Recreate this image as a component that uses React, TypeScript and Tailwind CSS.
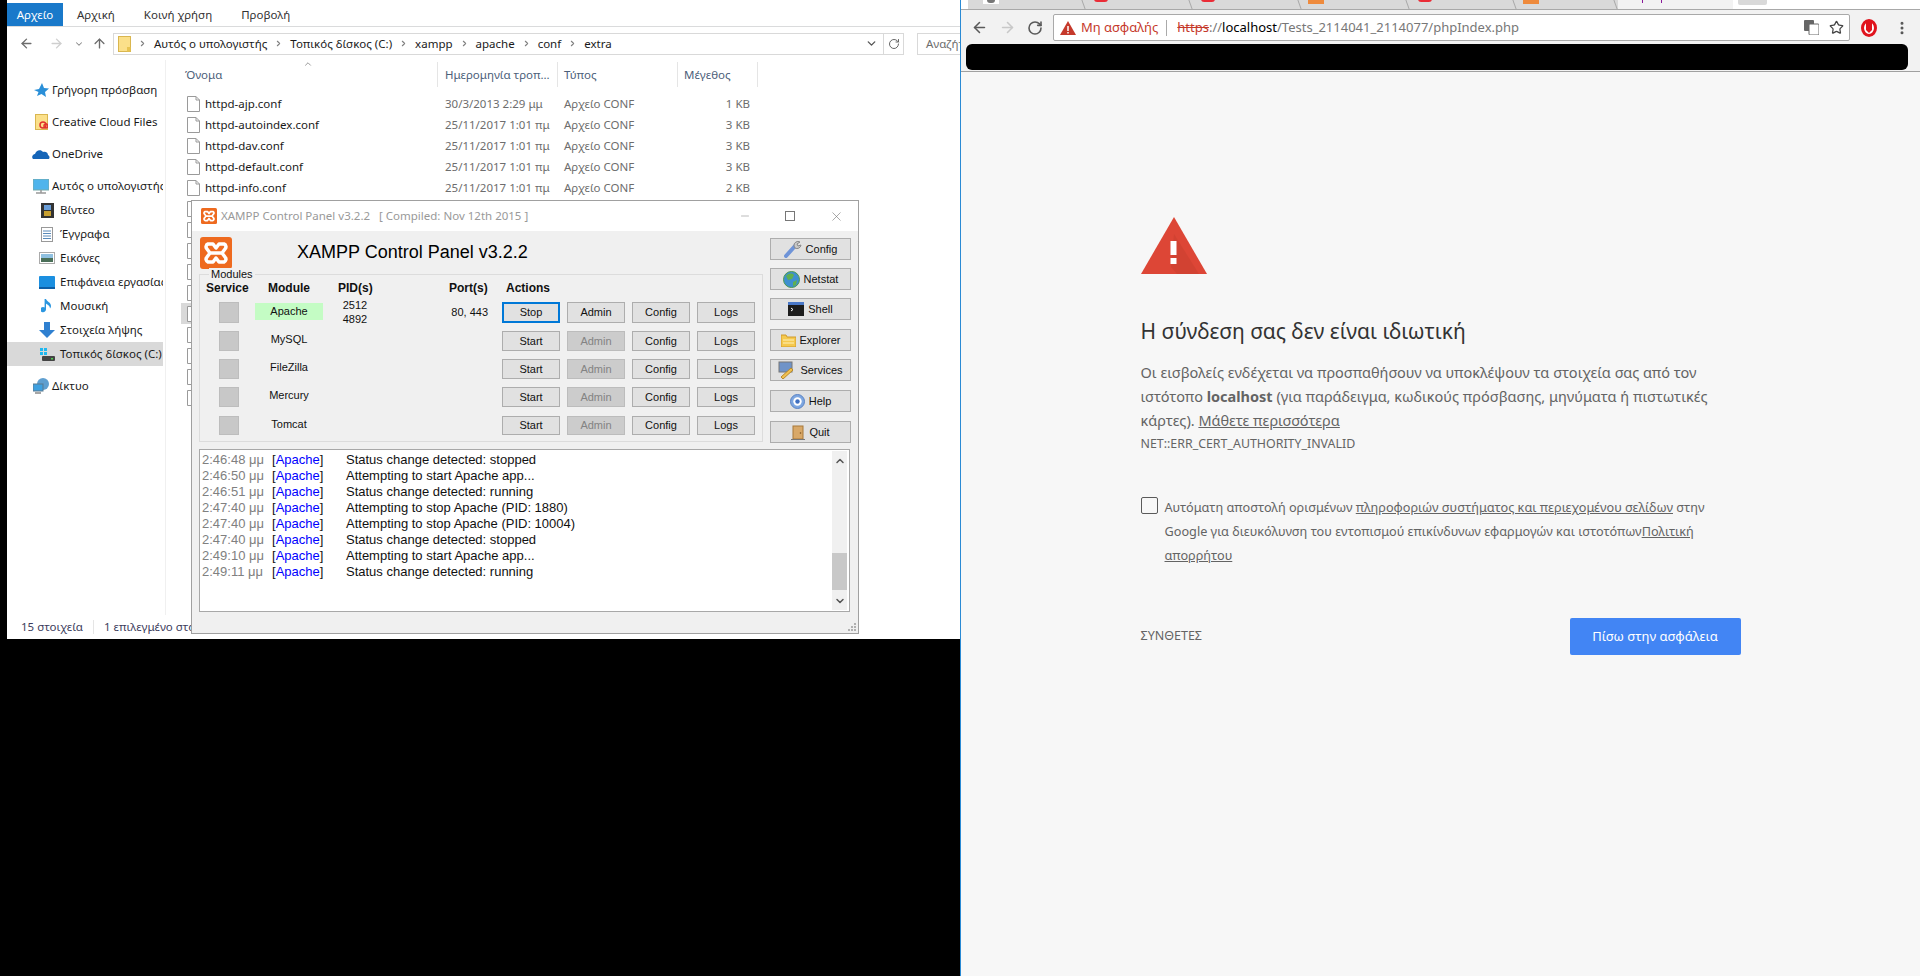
import { ArrowLeft, ArrowRight, ArrowUp, ChevronDown, ChevronRight, ChevronUp, RotateCw, Star, EllipsisVertical, Minus, X } from "lucide-react";

const files = [
  ["httpd-ajp.conf", "30/3/2013 2:29 μμ", "1 KB"],
  ["httpd-autoindex.conf", "25/11/2017 1:01 πμ", "3 KB"],
  ["httpd-dav.conf", "25/11/2017 1:01 πμ", "3 KB"],
  ["httpd-default.conf", "25/11/2017 1:01 πμ", "3 KB"],
  ["httpd-info.conf", "25/11/2017 1:01 πμ", "2 KB"],
];

const FileIcon = () => (
  <svg width="13" height="16" viewBox="0 0 13 16" className="shrink-0">
    <path d="M.5.5h8.500l3.500 3.500v11.500h-12z" fill="#fff" stroke="#9a9a9a" />
    <path d="M9 .5v3.500h3.500" fill="none" stroke="#9a9a9a" />
  </svg>
);

const XamppLogo = ({ size }: { size: number }) => (
  <svg width={size} height={size} viewBox="0 0 32 32" className="shrink-0">
    <rect width="32" height="32" rx="3" fill="#ee6a1f" />
    <path d="M8 7h5l3 4 3-4h5a3 3 0 0 1 1 5l-3 4 3 4a3 3 0 0 1-1 5h-5l-3-4-3 4H8a3 3 0 0 1-1-5l3-4-3-4a3 3 0 0 1 1-5z M10 16h12" fill="none" stroke="#fff" strokeWidth="3.500" strokeLinejoin="round" />
  </svg>
);

const Folder = () => (
  <svg width="13" height="16" viewBox="0 0 13 16" className="shrink-0">
    <rect x="0.500" y="0.500" width="12" height="15" fill="#fbe08a" stroke="#d9b64f" />
    <rect x="9" y="11" width="3.500" height="4.500" fill="#e8c452" />
  </svg>
);

const CloudFolder = () => (
  <svg width="13" height="16" viewBox="0 0 13 16" className="shrink-0">
    <rect x="0.500" y="0.500" width="12" height="15" fill="#fbe08a" stroke="#d9b64f" />
    <circle cx="8" cy="11" r="3" fill="none" stroke="#e0332b" strokeWidth="1.500" />
    <circle cx="11" cy="12" r="2" fill="none" stroke="#e0332b" strokeWidth="1.500" />
  </svg>
);

function NavItem({ label, child, selected, icon }: { label: string; child?: boolean; selected?: boolean; icon: React.ReactNode }) {
  return (
    <div className={`flex h-6 items-center overflow-hidden whitespace-nowrap ${child ? "pl-[30px]" : "pl-[24px]"} ${selected ? "bg-[#d9d9d9]" : ""}`}>
      <span className={`flex w-5 shrink-0 justify-center ${child ? "mr-[3px]" : "mr-[1px]"}`}>{icon}</span>
      <span>{label}</span>
    </div>
  );
}

function WinButton({ label, disabled, focused, className }: { label: string; disabled?: boolean; focused?: boolean; className: string }) {
  return (
    <div
      className={`flex items-center justify-center border text-[11px] ${className} ${
        focused ? "border-2 border-[#0078d7] bg-[#e1e1e1]" : disabled ? "border-[#bcbcbc] bg-[#cccccc] text-[#838383]" : "border-[#adadad] bg-[#e1e1e1]"
      }`}
    >
      {label}
    </div>
  );
}

const modules = [
  { name: "Apache", h: "h-[21px]", action: "Stop" },
  { name: "MySQL", h: "h-[20px]", action: "Start" },
  { name: "FileZilla", h: "h-[20px]", action: "Start" },
  { name: "Mercury", h: "h-[20px]", action: "Start" },
  { name: "Tomcat", h: "mt-[1px] h-[19px]", action: "Start" },
];

const logs = [
  ["2:46:48 μμ", "Status change detected: stopped"],
  ["2:46:50 μμ", "Attempting to start Apache app..."],
  ["2:46:51 μμ", "Status change detected: running"],
  ["2:47:40 μμ", "Attempting to stop Apache (PID: 1880)"],
  ["2:47:40 μμ", "Attempting to stop Apache (PID: 10004)"],
  ["2:47:40 μμ", "Status change detected: stopped"],
  ["2:49:10 μμ", "Attempting to start Apache app..."],
  ["2:49:11 μμ", "Status change detected: running"],
];

const sideButtons = [
  { label: "Config", mt: "", icon: <svg width="18" height="18" viewBox="0 0 18 18"><path d="M2 16 L11 6" stroke="#6f94d8" strokeWidth="4" strokeLinecap="round" /><path d="M10 6a4 4 0 0 1 6-4l-3 2 1 2 3-1a4 4 0 0 1-6 3z" fill="#c8c8c8" stroke="#888" /></svg> },
  { label: "Netstat", mt: "", icon: <svg width="17" height="17" viewBox="0 0 17 17"><circle cx="8.500" cy="8.500" r="8" fill="#3d8fd0" stroke="#4c9a4c" /><path d="M3 5c3-3 6-3 8-1l-2 4-4 1zM10 11l4-2-1 5-3 1z" fill="#5fb04f" /></svg> },
  { label: "Shell", mt: "", icon: <svg width="16" height="14" viewBox="0 0 16 14"><rect width="16" height="14" fill="#1c1c1c" /><rect width="16" height="3" fill="#4a78c8" /><path d="M3 6l2 1.500L3 9" stroke="#fff" fill="none" /></svg> },
  { label: "Explorer", mt: "mt-[1px]", icon: <svg width="15" height="13" viewBox="0 0 15 13"><path d="M0 1h5l1 2h9v10H0z" fill="#f5c94e" stroke="#d09a2a" /><path d="M2 6h11M2 9h11" stroke="#fff1b8" /></svg> },
  { label: "Services", mt: "", icon: <svg width="18" height="18" viewBox="0 0 18 18"><rect x="1" y="1" width="13" height="10" fill="#6f93c8" stroke="#777" /><path d="M3 16l10-9 2 2-10 9z" fill="#f0c050" stroke="#b98a2a" /></svg> },
  { label: "Help", mt: "mt-[1px]", icon: <svg width="15" height="15" viewBox="0 0 15 15"><circle cx="7.500" cy="7.500" r="7" fill="#7da6e0" stroke="#5a83c4" /><circle cx="7.500" cy="7.500" r="4.200" fill="#fff" /><circle cx="7.500" cy="7.500" r="2.200" fill="#3f6fc0" /></svg> },
  { label: "Quit", mt: "mt-[1px]", icon: <svg width="14" height="15" viewBox="0 0 14 15"><rect x="2" y="1" width="10" height="13" fill="#d8a868" stroke="#a87838" /><path d="M0 14.500h14" stroke="#777" /><circle cx="9.500" cy="8" r="0.800" fill="#7a5020" /></svg> },
];

const tabs = [
  { w: "w-[118px]", icon: "white" },
  { w: "w-[107px]", icon: "red" },
  { w: "w-[109px]", icon: "red" },
  { w: "w-[108px]", icon: "orange" },
  { w: "w-[107px]", icon: "red" },
  { w: "w-[101px]", icon: "orange" },
];

export default function App() {
  return (
    <div className="relative flex h-[976px] w-[1920px] overflow-hidden bg-black font-['Noto_Sans',sans-serif]">
      {/* Explorer */}
      <div className="ml-[7px] flex h-[639px] w-[953px] flex-col bg-white text-[11.5px] text-[#1a1a1a]">
        <div className="flex h-[27px] shrink-0 items-end border-b border-[#dadbdc]">
          <div className="flex h-[23px] w-[56px] items-center justify-center bg-[#1979ca] text-white">Αρχείο</div>
          <div className="flex h-[23px] items-center gap-[29px] pl-[14px] text-[#333]">
            <span>Αρχική</span>
            <span>Κοινή χρήση</span>
            <span>Προβολή</span>
          </div>
        </div>
        <div className="flex h-[33px] shrink-0 items-center">
          <ArrowLeft size={15} className="ml-[12px] text-[#6d6d6d]" strokeWidth={2.2} />
          <ArrowRight size={15} className="ml-[15px] text-[#cfcfcf]" strokeWidth={2.2} />
          <ChevronDown size={10} className="ml-[10px] text-[#888]" strokeWidth={2.5} />
          <ArrowUp size={15} className="ml-[8px] text-[#6d6d6d]" strokeWidth={2.2} />
          <div className="ml-[6px] flex h-[22px] w-[791px] items-center border border-[#d9d9d9] pl-[4px]">
            <Folder />
            {["Αυτός ο υπολογιστής", "Τοπικός δίσκος (C:)", "xampp", "apache", "conf", "extra"].map((c) => (
              <span key={c} className="flex items-center">
                <ChevronRight size={9} className="mx-[7px] text-[#808080]" strokeWidth={3} />
                {c}
              </span>
            ))}
            <div className="ml-auto flex h-full items-center">
              <ChevronDown size={13} className="mr-[5px] text-[#555]" strokeWidth={2.5} />
              <div className="flex h-full w-[20px] items-center justify-center border-l border-[#d9d9d9]">
                <RotateCw size={12} className="text-[#666]" />
              </div>
            </div>
          </div>
          <div className="ml-[13px] flex h-[22px] flex-1 items-center overflow-hidden whitespace-nowrap border border-r-0 border-[#d9d9d9] pl-[8px] text-[#6d6d6d]">Αναζήτ</div>
        </div>
        <div className="flex min-h-0 flex-1">
          <div className="flex w-[159px] shrink-0 flex-col border-r border-[#f0f0f0] pt-[18px]">
            <div className="w-[156px] text-[#1a1a1a]">
              <NavItem label="Γρήγορη πρόσβαση" icon={<svg width="15" height="15" viewBox="0 0 15 15"><path d="M8 0l2 5 5 .5-4 3.500 1 5-4.500-3L3 13l1.500-4L0 7l5-1z" fill="#2a8fd8" /></svg>} />
              <div className="h-2" />
              <NavItem label="Creative Cloud Files" icon={<CloudFolder />} />
              <div className="h-2" />
              <NavItem label="OneDrive" icon={<svg width="18" height="12" viewBox="0 0 18 12"><path d="M1 11c-2-2 0-5 2-5 1-4 6-5 8-2 3-1 5 1 5 3 2 1 2 4 0 4z" fill="#1565b8" /></svg>} />
              <div className="h-2" />
              <NavItem label="Αυτός ο υπολογιστής" icon={<svg width="16" height="15" viewBox="0 0 16 15"><rect width="16" height="11" fill="#4fb4ec" stroke="#7aa" /><path d="M3 14h10M8 11v3" stroke="#999" strokeWidth="1.500" /></svg>} />
              <NavItem child label="Βίντεο" icon={<svg width="13" height="15" viewBox="0 0 13 15"><rect width="13" height="15" fill="#333" /><rect x="3" y="2" width="7" height="5" fill="#6a9ed8" /><rect x="3" y="8" width="7" height="5" fill="#c8a030" /></svg>} />
              <NavItem child label="Έγγραφα" icon={<svg width="12" height="15" viewBox="0 0 12 15"><rect x="0.500" y="0.500" width="11" height="14" fill="#fff" stroke="#999" /><path d="M2 4h8M2 6.500h8M2 9h8M2 11.500h8" stroke="#5a8ab8" /></svg>} />
              <NavItem child label="Εικόνες" icon={<svg width="16" height="12" viewBox="0 0 16 12"><rect x="0.500" y="0.500" width="15" height="11" fill="#fff" stroke="#aaa" /><rect x="2" y="2" width="12" height="4" fill="#8fc0e0" /><rect x="2" y="6" width="12" height="4" fill="#4a6f58" /></svg>} />
              <NavItem child label="Επιφάνεια εργασίας" icon={<svg width="16" height="13" viewBox="0 0 16 13"><rect width="16" height="13" rx="1" fill="#1b8fe0" /><rect y="11" width="16" height="2" fill="#0d5ea6" /></svg>} />
              <NavItem child label="Μουσική" icon={<svg width="12" height="16" viewBox="0 0 12 16"><path d="M5 1v10.500a3 2.600 0 1 1-1.400-2.100V1z M5 1c1 3 5 3 5 7 0 1-.5 2-1 2.500 0-3-3-4-4-5z" fill="#2a96e0" /></svg>} />
              <NavItem child label="Στοιχεία λήψης" icon={<svg width="16" height="16" viewBox="0 0 16 16"><path d="M5 0h6v8h5l-8 8-8-8h5z" fill="#2f80d0" /></svg>} />
              <NavItem child selected label="Τοπικός δίσκος (C:)" icon={<svg width="15" height="13" viewBox="0 0 15 13"><rect x="0" y="0" width="3" height="3" fill="#1fb8f0" /><rect x="4" y="0" width="3" height="3" fill="#1fb8f0" /><rect x="0" y="4" width="3" height="3" fill="#1fb8f0" /><rect x="4" y="4" width="3" height="3" fill="#1fb8f0" /><rect x="2" y="8" width="13" height="5" rx="1" fill="#444" /><rect x="11" y="10" width="2" height="1.500" fill="#4fd04f" /></svg>} />
              <div className="h-2" />
              <NavItem label="Δίκτυο" icon={<svg width="17" height="16" viewBox="0 0 17 16"><circle cx="10" cy="6" r="6" fill="#5f9fd0" /><rect x="0" y="6" width="10" height="7" fill="#3ea0e0" stroke="#5a7a90" /><path d="M2 15h6" stroke="#888" strokeWidth="1.500" /></svg>} />
            </div>
          </div>
          <div className="min-w-0 flex-1 pt-[2px]">
            <div className="relative flex h-[25px] items-center text-[#4c607a]">
              <ChevronUp size={10} className="absolute left-[137px] top-[-3px] text-[#888]" strokeWidth={2} />
              <div className="flex h-full w-[272px] items-center border-r border-[#e5e5e5] pl-[19px]">Όνομα</div>
              <div className="flex h-full w-[120px] items-center whitespace-nowrap border-r border-[#e5e5e5] pl-[7px]">Ημερομηνία τροπ...</div>
              <div className="flex h-full w-[120px] items-center border-r border-[#e5e5e5] pl-[6px]">Τύπος</div>
              <div className="flex h-full w-[80px] items-center border-r border-[#e5e5e5] pl-[6px]">Μέγεθος</div>
            </div>
            <div className="pt-[6px]">
              {files.map(([n, d, s]) => (
                <div key={n} className="flex h-[21px] items-center whitespace-nowrap">
                  <div className="flex w-[272px] items-center gap-[5px] pl-[21px] text-[#1a1a1a]"><FileIcon />{n}</div>
                  <div className="w-[120px] pl-[7px] text-[#6d6d6d]">{d}</div>
                  <div className="w-[120px] pl-[6px] text-[#6d6d6d]">Αρχείο CONF</div>
                  <div className="w-[72px] text-right text-[#6d6d6d]">{s}</div>
                </div>
              ))}
              {Array.from({ length: 10 }).map((_, i) => (
                <div key={i} className={`flex h-[21px] items-center ${i === 5 ? "ml-[15px] w-[100px] bg-[#d9d9d9] pl-[6px]" : "pl-[21px]"}`}>
                  <FileIcon />
                </div>
              ))}
            </div>
          </div>
        </div>
        <div className="flex h-[24px] shrink-0 items-center pl-[14px] text-[#3c3c5c]">
          <span>15 στοιχεία</span>
          <span className="mx-[10px] h-[14px] w-px bg-[#e5e5e5]" />
          <span>1 επιλεγμένο στοιχείο</span>
        </div>
      </div>

      {/* XAMPP window */}
      <div className="absolute left-[191px] top-[200px] flex h-[434px] w-[668px] flex-col border border-[#a0a0a0] bg-[#f0f0f0] font-['Liberation_Sans',sans-serif] text-[11px] text-[#111]">
        <div className="flex h-[30px] shrink-0 items-center bg-white pl-[9px] font-['Noto_Sans',sans-serif] text-[11.5px] text-[#999]">
          <XamppLogo size={16} />
          <span className="ml-[4px]">XAMPP Control Panel v3.2.2</span>
          <span className="ml-[9px]">[ Compiled: Nov 12th 2015 ]</span>
          <div className="ml-auto flex items-center pr-[14px] text-[#777]">
            <Minus size={12} strokeWidth={1} />
            <div className="ml-[34px] h-[10px] w-[10px] border border-[#777]" />
            <X size={15} strokeWidth={1} className="ml-[34px]" />
          </div>
        </div>
        <div className="flex min-h-0 flex-1 flex-col px-[7px] pt-[6px]">
          <div className="flex gap-[7px]">
            <div className="w-[564px] shrink-0">
              <div className="flex h-[37px] items-start">
                <div className="ml-[1px]"><XamppLogo size={32} /></div>
                <div className="ml-[65px] mt-[4px] text-[18px] leading-[22px] text-black">XAMPP Control Panel v3.2.2</div>
              </div>
              <div className="relative h-[168px] border border-[#dcdcdc]">
                <span className="absolute left-[9px] top-[-7px] bg-[#f0f0f0] px-[2px] leading-[13px]">Modules</span>
                <div className="flex h-[27px] items-end pb-[5px] text-[12px] font-bold">
                  <span className="ml-[6px] w-[62px]">Service</span>
                  <span className="w-[70px]">Module</span>
                  <span className="w-[111px]">PID(s)</span>
                  <span className="w-[57px]">Port(s)</span>
                  <span>Actions</span>
                </div>
                <div className="flex flex-col gap-[8px]">
                  {modules.map((m, i) => (
                    <div key={m.name} className={`flex ${m.h} items-stretch`}>
                      <div className="ml-[19px] w-[20px] border border-[#bdbdbd] bg-[#c8c8c8]" />
                      <div className={`ml-[16px] flex w-[68px] items-center justify-center ${i === 0 ? "mb-[3px] mt-[1px] bg-[#c4fcc4]" : "mb-[3px]"}`}>{m.name}</div>
                      <div className="flex w-[64px] flex-col items-center justify-center pb-[2px] leading-[14px]">
                        {i === 0 && <><span>2512</span><span>4892</span></>}
                      </div>
                      <div className="flex w-[101px] items-center justify-end">{i === 0 ? "80, 443" : ""}</div>
                      <div className="ml-[14px] flex gap-[7px]">
                        <WinButton label={m.action} focused={i === 0} className="w-[58px]" />
                        <WinButton label="Admin" disabled={i !== 0} className="w-[58px]" />
                        <WinButton label="Config" className="w-[58px]" />
                        <WinButton label="Logs" className="w-[58px]" />
                      </div>
                    </div>
                  ))}
                </div>
              </div>
            </div>
            <div className="flex w-[82px] flex-col gap-[8px] pt-[1px]">
              {sideButtons.map((b) => (
                <div key={b.label} className={`flex h-[22px] items-center justify-center gap-[4px] border border-[#adadad] bg-[#e1e1e1] text-[11px] ${b.mt}`}>
                  {b.icon}
                  <span>{b.label}</span>
                </div>
              ))}
            </div>
          </div>
          <div className="mt-[6px] flex h-[163px] w-[651px] border border-[#a8a8a8] bg-white pl-[2px] pt-[2px] text-[13px] leading-[16px]">
            <div className="flex-1">
              {logs.map(([t, msg], i) => (
                <div key={i} className="flex h-[16px] whitespace-nowrap">
                  <span className="w-[70px] text-[#808080]">{t}</span>
                  <span className="w-[74px]">[<span className="text-[#0000ff]">Apache</span>]</span>
                  <span>{msg}</span>
                </div>
              ))}
            </div>
            <div className="mb-[1px] mr-[2px] -mt-[1px] flex w-[15px] flex-col items-center justify-between bg-[#f0f0f0]">
              <ChevronUp size={12} strokeWidth={3} className="mt-[4px] text-[#555]" />
              <div className="mt-auto h-[37px] w-full bg-[#c8c8c8]" />
              <ChevronDown size={12} strokeWidth={3} className="mb-[3px] mt-[5px] text-[#555]" />
            </div>
          </div>
        </div>
        <div className="absolute bottom-[2px] right-[2px] grid grid-cols-3 gap-[1px]">
          {[0, 1, 2, 3, 4, 5, 6, 7, 8].map((i) => (
            <span key={i} className={`h-[2px] w-[2px] ${[0, 1, 3].includes(i) ? "" : "bg-[#b0b0b0]"}`} />
          ))}
        </div>
      </div>

      {/* Chrome */}
      <div className="flex h-[976px] w-[960px] flex-col border-l border-[#2a8ad4] bg-[#f7f7f7] font-['Noto_Sans',sans-serif]">
        <div className="flex h-[10px] shrink-0 overflow-hidden border-b border-[#a8a8a8] bg-white pl-[7px]">
          {tabs.map((t, i) => (
            <div key={i} className={`relative ${t.w} shrink-0 bg-[#d9d9d9]`}>
              <span className="absolute right-[2px] top-0 h-full w-px skew-x-[20deg] bg-[#a8a8a8]" />
              {t.icon === "white" && <span className="absolute left-[15px] top-0 h-[4px] w-[16px] bg-white"><span className="mx-auto block h-[3px] w-[8px] rounded-b-full bg-[#777]" /></span>}
              {t.icon === "red" && <span className="absolute left-[8px] top-[-1px] h-[3px] w-[14px] rounded-b-full bg-[#ea2c36]" />}
              {t.icon === "orange" && <span className="absolute left-[6px] top-0 h-[4px] w-[16px] bg-[#ee8a3c]" />}
            </div>
          ))}
          <div className="relative w-[115px] shrink-0 bg-[#f2f2f2]">
            <span className="absolute left-[24px] top-0 h-[3px] w-px bg-[#8a1a9a]" />
            <span className="absolute left-[43px] top-0 h-[3px] w-px bg-[#8a1a9a]" />
          </div>
          <div className="ml-[5px] h-[5px] w-[29px] rounded-b-[2px] bg-[#d9d9d9]" />
        </div>
        <div className="flex h-[34px] shrink-0 items-center bg-[#f2f2f2] pt-[1px]">
          <ArrowLeft size={17} className="ml-[10px] text-[#5a5a5a]" strokeWidth={2.2} />
          <ArrowRight size={17} className="ml-[11px] text-[#c8c8c8]" strokeWidth={2.2} />
          <RotateCw size={16} className="ml-[11px] text-[#5a5a5a]" strokeWidth={2.4} />
          <div className="ml-[10px] flex h-[27px] w-[797px] items-center rounded-[2px] border border-[#a9a9a9] bg-white pl-[6px] text-[13px]">
            <svg width="16" height="14" viewBox="0 0 16 14" className="shrink-0"><path d="M8 0l8 14H0z" fill="#c5392b" /><path d="M8 5v5M8 11v1.500" stroke="#fff" strokeWidth="1.500" /></svg>
            <span className="ml-[5px] text-[#c5392b]">Μη ασφαλής</span>
            <span className="ml-[8px] mr-[10px] h-[16px] w-px bg-[#aaa]" />
            <span className="text-[#c5392b] line-through">https</span>
            <span className="text-[#777]">://</span>
            <span className="text-black">localhost</span>
            <span className="text-[#777]">/Tests_2114041_2114077/phpIndex.php</span>
            <div className="ml-auto flex items-center pr-[5px]">
              <svg width="15" height="15" viewBox="0 0 15 15"><rect width="10" height="11" rx="1" fill="#666" /><rect x="5" y="4" width="10" height="11" rx="1" fill="#fff" stroke="#666" /></svg>
              <Star size={15} className="ml-[10px] text-[#444]" strokeWidth={2} />
            </div>
          </div>
          <svg width="16" height="18" viewBox="0 0 16 18" className="ml-[11px]"><ellipse cx="8" cy="9" rx="6.500" ry="7.500" fill="#fff" stroke="#e0141e" strokeWidth="3" /><path d="M5 3h6v8l-3 3-3-3z" fill="#e0141e" /></svg>
          <EllipsisVertical size={16} className="ml-[17px] text-[#555]" strokeWidth={2.5} />
        </div>
        <div className="flex h-[28px] shrink-0 items-start border-b border-[#a0a0a0] bg-[#f2f2f2] pl-[5px]">
          <div className="h-[26px] w-[942px] rounded-[6px] bg-black" />
        </div>
        <div className="flex flex-1 justify-center">
          <div className="w-[600px] pt-[145px] text-[#646464]">
            <svg width="66" height="57" viewBox="0 0 66 57">
              <path d="M33 0L66 57H0z" fill="#dd4636" />
              <path d="M33 17l25 40H36L30 50z" fill="#c9402f" opacity="0.550" />
              <rect x="29.500" y="24" width="6" height="14" fill="#fff" />
              <rect x="29.500" y="41" width="6" height="6" fill="#fff" />
            </svg>
            <h1 className="mt-[39px] text-[21px] font-normal leading-[36px] text-[#333]">Η σύνδεση σας δεν είναι ιδιωτική</h1>
            <p className="mt-[11px] text-[14.500px] leading-[24px]">
              Οι εισβολείς ενδέχεται να προσπαθήσουν να υποκλέψουν τα στοιχεία σας από τον ιστότοπο <b>localhost</b> (για παράδειγμα, κωδικούς πρόσβασης, μηνύματα ή πιστωτικές κάρτες). <span className="underline">Μάθετε περισσότερα</span>
            </p>
            <p className="mt-[1px] text-[12.400px] leading-[22px]">NET::ERR_CERT_AUTHORITY_INVALID</p>
            <div className="mt-[40px] flex">
              <div className="mt-[2px] h-[17px] w-[17px] shrink-0 rounded-[2px] border border-[#5a5a5a]" />
              <p className="ml-[7px] text-[12.700px] leading-[24px]">
                Αυτόματη αποστολή ορισμένων <span className="underline">πληροφοριών συστήματος και περιεχομένου σελίδων</span> στην Google για διευκόλυνση του εντοπισμού επικίνδυνων εφαρμογών και ιστοτόπων<span className="underline">Πολιτική απορρήτου</span>
              </p>
            </div>
            <div className="mt-[51px] flex items-center justify-between">
              <span className="text-[12.500px]">ΣΥΝΘΕΤΕΣ</span>
              <div className="flex h-[37px] w-[171px] items-center justify-center rounded-[2px] bg-[#4285f4] text-[13px] text-white">Πίσω στην ασφάλεια</div>
            </div>
          </div>
        </div>
      </div>
    </div>
  );
}
